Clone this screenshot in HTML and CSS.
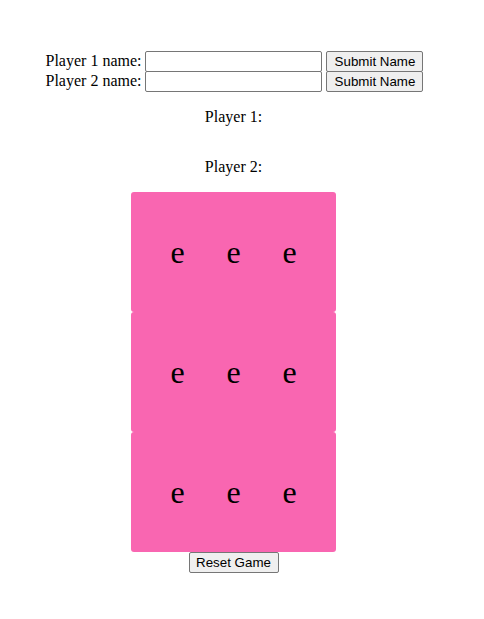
FILE: index.html
```html
<!DOCTYPE html>
<html>
<head>
<meta charset="utf-8">
<link rel="stylesheet" href="styles.css">
</head>
<body>
<main class="page">
  <div class="names">
    <div class="name-row">
      <label>Player 1 name:</label> <input type="text" class="name-input"> <button class="btn">Submit Name</button>
    </div>
    <div class="name-row">
      <label>Player 2 name:</label> <input type="text" class="name-input"> <button class="btn">Submit Name</button>
    </div>
  </div>
  <p class="player p1">Player 1:</p>
  <p class="player p2">Player 2:</p>
  <div class="board">
    <div class="row"><span class="cell">e</span><span class="cell">e</span><span class="cell">e</span></div>
    <div class="row"><span class="cell">e</span><span class="cell">e</span><span class="cell">e</span></div>
    <div class="row"><span class="cell">e</span><span class="cell">e</span><span class="cell">e</span></div>
  </div>
  <button class="btn reset">Reset Game</button>
</main>
</body>
</html>
```
FILE: styles.css
```css
html, body {
  margin: 0;
  padding: 0;
  background: #fff;
}
body {
  font-family: "Liberation Serif", "Times New Roman", serif;
  font-size: 16px;
  color: #000;
}
.page {
  width: 467px;
  text-align: center;
  padding-top: 51px;
}
.names {
  padding-left: 2px;
}
.name-row {
  height: 20px;
  display: flex;
  justify-content: center;
  align-items: center;
  gap: 4px;
}
.name-input {
  box-sizing: border-box;
  width: 177px;
  height: 21px;
  border: 1px solid #767676;
  border-radius: 2px;
  padding: 1px 2px;
  margin: 0;
  font-family: "Liberation Sans", Arial, sans-serif;
  font-size: 13.33px;
}
.btn {
  box-sizing: border-box;
  height: 21px;
  padding: 1px 6px;
  margin: 0;
  font-family: "Liberation Sans", Arial, sans-serif;
  font-size: 13.33px;
  color: #000;
  background: #efefef;
  border: 1px solid #767676;
  border-radius: 2px;
}
.name-row .btn {
  width: 97px;
}
.player {
  margin: 0;
  line-height: 18px;
}
.p1 {
  margin-top: 17px;
}
.p2 {
  margin-top: 32px;
}
.board {
  width: 205px;
  margin: 16px auto 0;
}
.row {
  height: 120px;
  background: #f966b1;
  border-radius: 3px;
  display: grid;
  grid-template-columns: repeat(3, 56px);
  justify-content: center;
  align-items: center;
  font-size: 32px;
}
.cell {
  display: block;
  text-align: center;
}
.reset {
  display: block;
  width: 90px;
  height: 21px;
  margin: 0 auto;
}
```
